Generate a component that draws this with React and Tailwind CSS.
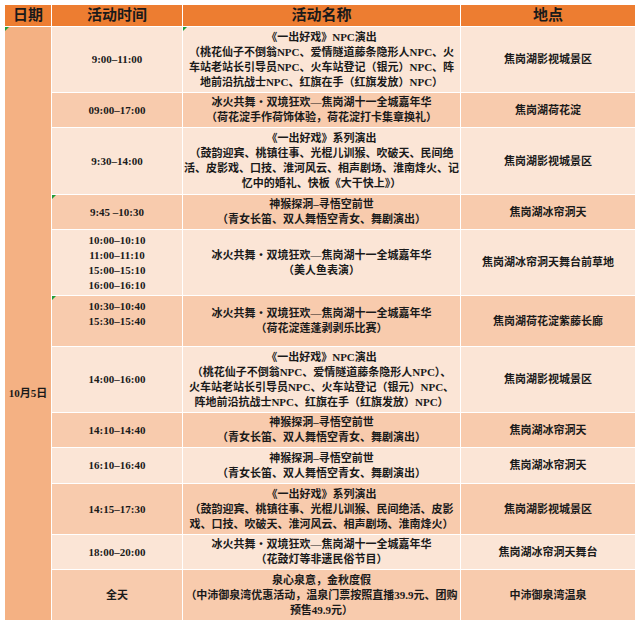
import React from "react";

const FIRE = "冰火共舞・双境狂欢—焦岗湖十一全城嘉年华";

const rows = [
  {
    time: ["9:00–11:00"],
    name: [
      "《一出好戏》NPC演出",
      "（桃花仙子不倒翁NPC、爱情隧道藤条隐形人NPC、火",
      "车站老站长引导员NPC、火车站登记（银元）NPC、阵",
      "地前沿抗战士NPC、红旗在手（红旗发放）NPC）",
    ],
    loc: "焦岗湖影视城景区",
    dark: false,
    markName: true,
  },
  {
    time: ["09:00–17:00"],
    name: [FIRE, "（荷花淀手作荷饰体验，荷花淀打卡集章换礼）"],
    loc: "焦岗湖荷花淀",
    dark: true,
  },
  {
    time: ["9:30–14:00"],
    name: [
      "《一出好戏》系列演出",
      "（鼓韵迎宾、桃镇往事、光棍儿训猴、吹破天、民间绝",
      "活、皮影戏、口技、淮河风云、相声剧场、淮南烽火、记",
      "忆中的婚礼、快板《大干快上》）",
    ],
    loc: "焦岗湖影视城景区",
    dark: false,
  },
  {
    time: ["9:45 –10:30"],
    name: ["神猴探洞–寻悟空前世", "（青女长笛、双人舞悟空青女、舞剧演出）"],
    loc: "焦岗湖冰帘洞天",
    dark: true,
    markTime: true,
  },
  {
    time: ["10:00–10:10", "11:00–11:10", "15:00–15:10", "16:00–16:10"],
    name: [FIRE, "（美人鱼表演）"],
    loc: "焦岗湖冰帘洞天舞台前草地",
    dark: false,
  },
  {
    time: ["10:30–10:40", "15:30–15:40"],
    name: [FIRE, "（荷花淀莲蓬剥剥乐比赛）"],
    loc: "焦岗湖荷花淀紫藤长廊",
    dark: true,
    markTime: true,
    timeTop: true,
  },
  {
    time: ["14:00–16:00"],
    name: [
      "《一出好戏》NPC演出",
      "（桃花仙子不倒翁NPC、爱情隧道藤条隐形人NPC）、",
      "火车站老站长引导员NPC、火车站登记（银元）NPC、",
      "阵地前沿抗战士NPC、红旗在手（红旗发放）NPC）",
    ],
    loc: "焦岗湖影视城景区",
    dark: false,
  },
  {
    time: ["14:10–14:40"],
    name: ["神猴探洞–寻悟空前世", "（青女长笛、双人舞悟空青女、舞剧演出）"],
    loc: "焦岗湖冰帘洞天",
    dark: true,
  },
  {
    time: ["16:10–16:40"],
    name: ["神猴探洞–寻悟空前世", "（青女长笛、双人舞悟空青女、舞剧演出）"],
    loc: "焦岗湖冰帘洞天",
    dark: false,
  },
  {
    time: ["14:15–17:30"],
    name: [
      "《一出好戏》系列演出",
      "（鼓韵迎宾、桃镇往事、光棍儿训猴、民间绝活、皮影",
      "戏、口技、吹破天、淮河风云、相声剧场、淮南烽火）",
    ],
    loc: "焦岗湖影视城景区",
    dark: true,
  },
  {
    time: ["18:00–20:00"],
    name: [FIRE, "（花鼓灯等非遗民俗节目）"],
    loc: "焦岗湖冰帘洞天舞台",
    dark: false,
  },
  {
    time: ["全天"],
    name: [
      "泉心泉意，金秋度假",
      "（中沛御泉湾优惠活动，温泉门票按照直播39.9元、团购",
      "预售49.9元）",
    ],
    loc: "中沛御泉湾温泉",
    dark: true,
  },
];

function Mark() {
  return (
    <span className="absolute left-0 top-0 w-0 h-0 border-t-[4px] border-r-[4px] border-t-[#1f9d3a] border-r-transparent" />
  );
}

export default function App() {
  return (
    <div
      className="w-[640px] h-[626px] bg-white pt-[5px] pl-[5px] text-[#1a1a1a]"
      style={{ fontFamily: '"Liberation Serif", "Noto Sans CJK SC", serif' }}
    >
      <div className="w-[630px] grid grid-cols-[46px_130px_277px_174px] grid-rows-[21px_65px_34px_66px_34px_65px_50px_65px_34px_35px_50px_34px_50px] gap-px bg-white">
        {["日期", "活动时间", "活动名称", "地点"].map((h) => (
          <div
            key={h}
            className="bg-[#ED7D31] flex items-center justify-center text-[15px] font-bold leading-none"
          >
            {h}
          </div>
        ))}
        <div className="relative col-start-1 row-start-2 row-span-12 bg-[#F4B183] flex items-center justify-center pt-[140px] text-[11px] font-bold">
          <Mark />
          10月5日
        </div>
        {rows.map((r, i) => {
          const bg = r.dark ? "bg-[#F8CBAD]" : "bg-[#FBE5D6]";
          return (
            <React.Fragment key={i}>
              <div
                className={`relative ${bg} flex flex-col ${
                  r.timeTop ? "justify-start pt-[3px]" : "justify-center"
                } items-center text-[11px] leading-[15px] font-bold`}
              >
                {r.markTime && <Mark />}
                {r.time.map((t) => (
                  <div key={t} className="whitespace-nowrap">
                    {t}
                  </div>
                ))}
              </div>
              <div
                className={`relative ${bg} flex flex-col justify-center items-center text-[11px] leading-[15px] font-bold`}
              >
                {r.markName && <Mark />}
                {r.name.map((t, j) => (
                  <div key={j} className="whitespace-nowrap">
                    {t}
                  </div>
                ))}
              </div>
              <div
                className={`${bg} flex items-center justify-center text-[11px] leading-[15px] font-bold whitespace-nowrap`}
              >
                {r.loc}
              </div>
            </React.Fragment>
          );
        })}
      </div>
    </div>
  );
}
